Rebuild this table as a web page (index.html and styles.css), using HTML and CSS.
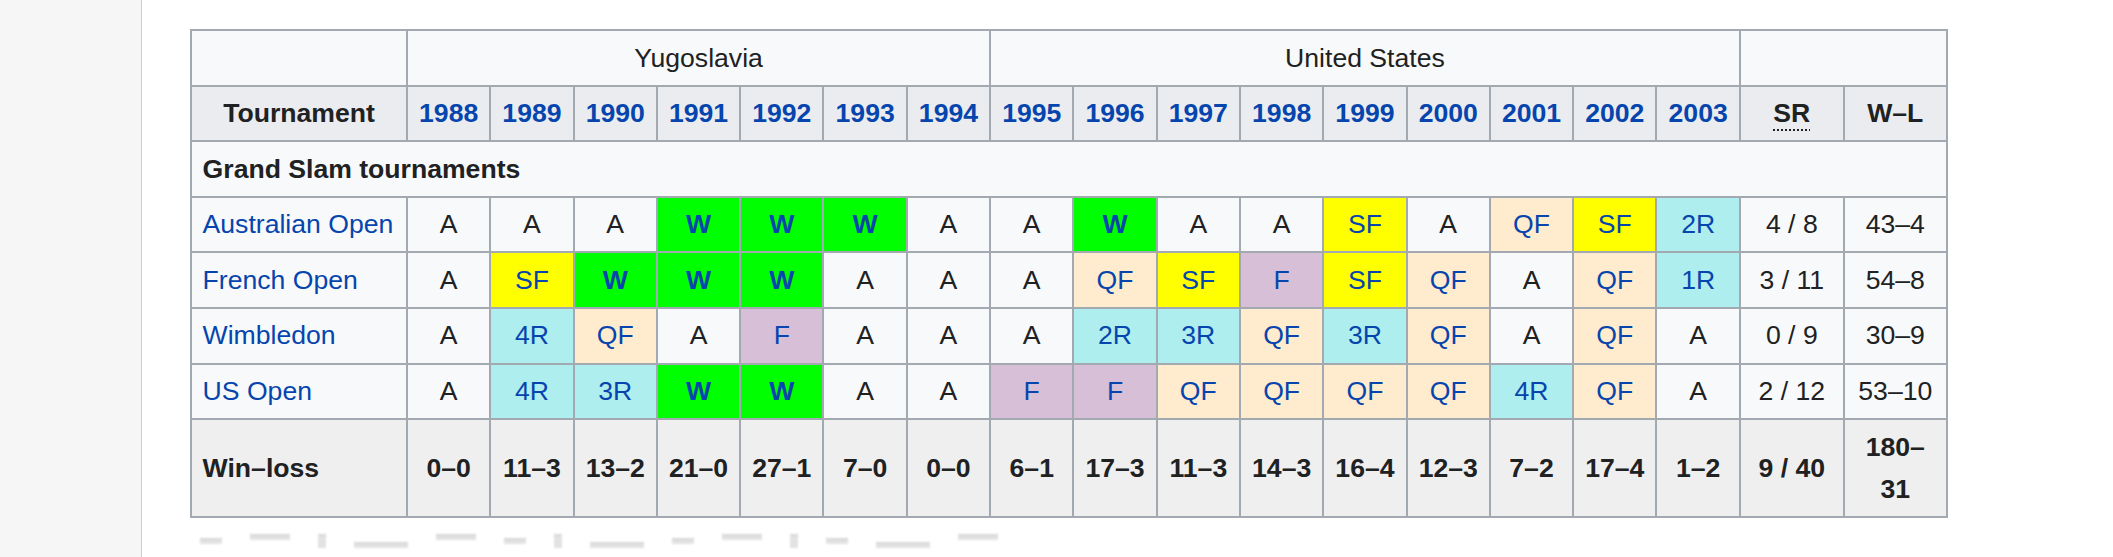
FILE: index.html
```html
<!DOCTYPE html>
<html lang="en">
<head>
<meta charset="utf-8">
<title>Grand Slam performance timeline</title>
<link rel="stylesheet" href="styles.css">
</head>
<body>
<div class="page">
  <aside class="sidebar"></aside>
  <main class="content">
    <table class="wikitable">
      <colgroup>
        <col class="c-name">
        <col class="c-year"><col class="c-year"><col class="c-year"><col class="c-year">
        <col class="c-year"><col class="c-year"><col class="c-year"><col class="c-year">
        <col class="c-year"><col class="c-year"><col class="c-year"><col class="c-year">
        <col class="c-year"><col class="c-year"><col class="c-year"><col class="c-year">
        <col class="c-sr">
        <col class="c-wl">
      </colgroup>
      <tr class="countries">
        <td></td>
        <td colspan="7">Yugoslavia</td>
        <td colspan="9">United States</td>
        <td colspan="2"></td>
      </tr>
      <tr class="head">
        <th>Tournament</th>
        <th><a>1988</a></th><th><a>1989</a></th><th><a>1990</a></th><th><a>1991</a></th>
        <th><a>1992</a></th><th><a>1993</a></th><th><a>1994</a></th><th><a>1995</a></th>
        <th><a>1996</a></th><th><a>1997</a></th><th><a>1998</a></th><th><a>1999</a></th>
        <th><a>2000</a></th><th><a>2001</a></th><th><a>2002</a></th><th><a>2003</a></th>
        <th><abbr>SR</abbr></th>
        <th>W–L</th>
      </tr>
      <tr class="section">
        <td colspan="19">Grand Slam tournaments</td>
      </tr>
      <tr>
        <td class="name"><a>Australian Open</a></td>
        <td>A</td><td>A</td><td>A</td>
        <td class="w"><a>W</a></td><td class="w"><a>W</a></td><td class="w"><a>W</a></td>
        <td>A</td><td>A</td>
        <td class="w"><a>W</a></td>
        <td>A</td><td>A</td>
        <td class="sf"><a>SF</a></td>
        <td>A</td>
        <td class="qf"><a>QF</a></td>
        <td class="sf"><a>SF</a></td>
        <td class="r"><a>2R</a></td>
        <td>4 / 8</td><td>43–4</td>
      </tr>
      <tr>
        <td class="name"><a>French Open</a></td>
        <td>A</td>
        <td class="sf"><a>SF</a></td>
        <td class="w"><a>W</a></td><td class="w"><a>W</a></td><td class="w"><a>W</a></td>
        <td>A</td><td>A</td><td>A</td>
        <td class="qf"><a>QF</a></td>
        <td class="sf"><a>SF</a></td>
        <td class="f"><a>F</a></td>
        <td class="sf"><a>SF</a></td>
        <td class="qf"><a>QF</a></td>
        <td>A</td>
        <td class="qf"><a>QF</a></td>
        <td class="r"><a>1R</a></td>
        <td>3 / 11</td><td>54–8</td>
      </tr>
      <tr>
        <td class="name"><a>Wimbledon</a></td>
        <td>A</td>
        <td class="r"><a>4R</a></td>
        <td class="qf"><a>QF</a></td>
        <td>A</td>
        <td class="f"><a>F</a></td>
        <td>A</td><td>A</td><td>A</td>
        <td class="r"><a>2R</a></td>
        <td class="r"><a>3R</a></td>
        <td class="qf"><a>QF</a></td>
        <td class="r"><a>3R</a></td>
        <td class="qf"><a>QF</a></td>
        <td>A</td>
        <td class="qf"><a>QF</a></td>
        <td>A</td>
        <td>0 / 9</td><td>30–9</td>
      </tr>
      <tr>
        <td class="name"><a>US Open</a></td>
        <td>A</td>
        <td class="r"><a>4R</a></td>
        <td class="r"><a>3R</a></td>
        <td class="w"><a>W</a></td><td class="w"><a>W</a></td>
        <td>A</td><td>A</td>
        <td class="f"><a>F</a></td>
        <td class="f"><a>F</a></td>
        <td class="qf"><a>QF</a></td>
        <td class="qf"><a>QF</a></td>
        <td class="qf"><a>QF</a></td>
        <td class="qf"><a>QF</a></td>
        <td class="r"><a>4R</a></td>
        <td class="qf"><a>QF</a></td>
        <td>A</td>
        <td>2 / 12</td><td>53–10</td>
      </tr>
      <tr class="total">
        <th class="label">Win–loss</th>
        <td>0–0</td><td>11–3</td><td>13–2</td><td>21–0</td><td>27–1</td><td>7–0</td><td>0–0</td>
        <td>6–1</td><td>17–3</td><td>11–3</td><td>14–3</td><td>16–4</td><td>12–3</td><td>7–2</td><td>17–4</td><td>1–2</td>
        <td>9 / 40</td><td>180–31</td>
      </tr>
    </table>
    <div class="fade" aria-hidden="true">
      <span class="m1"></span><span class="m2"></span><span class="m3"></span><span class="m4"></span>
      <span class="m2"></span><span class="m1"></span><span class="m3"></span><span class="m4"></span>
      <span class="m1"></span><span class="m2"></span><span class="m3"></span><span class="m1"></span>
      <span class="m4"></span><span class="m2"></span>
    </div>
  </main>
</div>
</body>
</html>
```

FILE: styles.css
```css
html, body {
  margin: 0;
  padding: 0;
  overflow: hidden;
}

body {
  font-family: "Liberation Sans", Arial, sans-serif;
  color: #202122;
  background: #ffffff;
}

.page {
  display: flex;
  height: 557px;
}

.sidebar {
  flex: none;
  width: 141px;
  background: #f6f6f6;
  border-right: 1px solid #a7d7f9;
}

.content {
  flex: 1;
  padding: 29px 0 0 48px;
}

.wikitable {
  border-collapse: collapse;
  table-layout: fixed;
  width: 1757px;
  background: #f8f9fa;
  color: #202122;
  border: 2px solid #a2a9b1;
  font-size: 26.6px;
  line-height: 42.6px;
}

.c-name { width: 216px; }
.c-year { width: 83.3px; }
.c-sr { width: 104px; }
.c-wl { width: 103px; }

.wikitable th,
.wikitable td {
  border: 2px solid #a2a9b1;
  padding: 5.5px 10.6px;
  text-align: center;
  font-weight: normal;
}

.wikitable a {
  color: #0645ad;
  text-decoration: none;
}

.head th {
  background: #eaecf0;
  font-weight: bold;
}

.head abbr {
  text-decoration: underline dotted;
  text-decoration-thickness: 2px;
  text-underline-offset: 7px;
}

.section td {
  text-align: left;
  font-weight: bold;
}

.wikitable td.name {
  text-align: left;
}

.wikitable td.w {
  background: #00ff00;
  font-weight: bold;
}

.wikitable td.sf {
  background: #ffff00;
}

.wikitable td.f {
  background: #d8bfd8;
}

.wikitable td.qf {
  background: #ffebcd;
}

.wikitable td.r {
  background: #afeeee;
}

.total th,
.total td {
  background: #efefef;
  font-weight: bold;
}

.total th.label {
  text-align: left;
}

.fade {
  display: flex;
  gap: 28px;
  align-items: flex-start;
  margin: 16px 0 0 10px;
  filter: blur(1.2px);
  opacity: 0.7;
}

.fade span {
  display: block;
  height: 4px;
  background: #d6d6d6;
  border-top: 2px solid #c8c8c8;
}

.fade .m1 { width: 22px; margin-top: 4px; }
.fade .m2 { width: 40px; }
.fade .m3 { width: 8px; height: 12px; }
.fade .m4 { width: 54px; margin-top: 8px; }
```
